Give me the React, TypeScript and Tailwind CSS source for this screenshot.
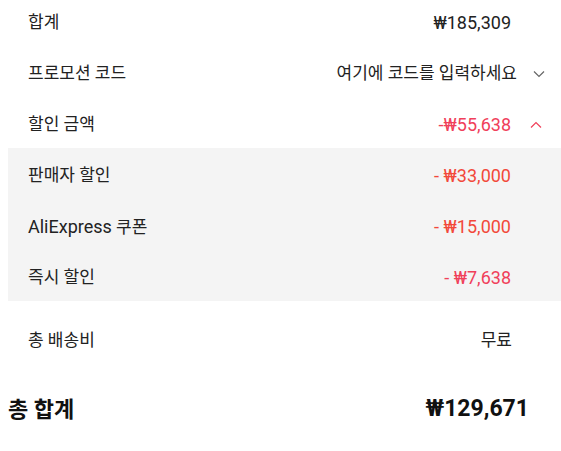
import React from "react";

const font = { fontFamily: 'Roboto, "Noto Sans CJK KR", sans-serif' };

function ChevronDown() {
  return (
    <svg width="14" height="14" viewBox="0 0 14 14" fill="none" stroke="#666" strokeWidth="1.2">
      <path d="M2 4.5 L7 9.5 L12 4.5" />
    </svg>
  );
}
function ChevronUp() {
  return (
    <svg width="14" height="14" viewBox="0 0 14 14" fill="none" stroke="#f0405a" strokeWidth="1.2">
      <path d="M2 9.5 L7 4.5 L12 9.5" />
    </svg>
  );
}

export default function App() {
  return (
    <div className="w-[561px] h-[451px] bg-white overflow-hidden text-[17px] text-[#222]" style={font}>
      <div className="-mt-[5px]">
        <div className="flex h-[51px] items-center pt-[4px] pl-[28px] pr-[50px]">
          <div className="flex-1">합계</div>
          <div className="text-[18px]">₩185,309</div>
        </div>
        <div className="flex h-[51px] items-center pt-[4px] pl-[28px]">
          <div className="flex-1">프로모션 코드</div>
          <div>여기에 코드를 입력하세요</div>
          <div className="flex w-[44px] items-center justify-center"><ChevronDown /></div>
        </div>
        <div className="flex h-[51px] items-center pt-[4px] pl-[28px]">
          <div className="flex-1">할인 금액</div>
          <div className="text-[18px] text-[#f0405a]">-₩55,638</div>
          <div className="flex w-[50px] items-center justify-center"><ChevronUp /></div>
        </div>
      </div>
      <div className="ml-[8px] bg-[#f4f4f4]">
        <div className="flex h-[51px] items-center pt-[4px] pl-[20px] pr-[50px]">
          <div className="flex-1">판매자 할인</div>
          <div className="text-[18px] text-[#f2483a]">- ₩33,000</div>
        </div>
        <div className="flex h-[51px] items-center pt-[4px] pl-[20px] pr-[50px]">
          <div className="flex-1"><span className="text-[18px]">AliExpress</span> 쿠폰</div>
          <div className="text-[18px] text-[#f2483a]">- ₩15,000</div>
        </div>
        <div className="flex h-[51px] items-center pt-[4px] pl-[20px] pr-[50px]">
          <div className="flex-1">즉시 할인</div>
          <div className="text-[18px] text-[#f0405a]">- ₩7,638</div>
        </div>
      </div>
      <div className="flex h-[52px] mt-[14px] items-center pl-[28px] pr-[49px]">
        <div className="flex-1">총 배송비</div>
        <div>무료</div>
      </div>
      <div className="flex h-[56px] mt-[14px] items-center pl-[8px] pr-[32px] font-bold text-[#111]">
        <div className="flex-1 text-[22px]">총 합계</div>
        <div className="text-[23px]">₩129,671</div>
      </div>
    </div>
  );
}
